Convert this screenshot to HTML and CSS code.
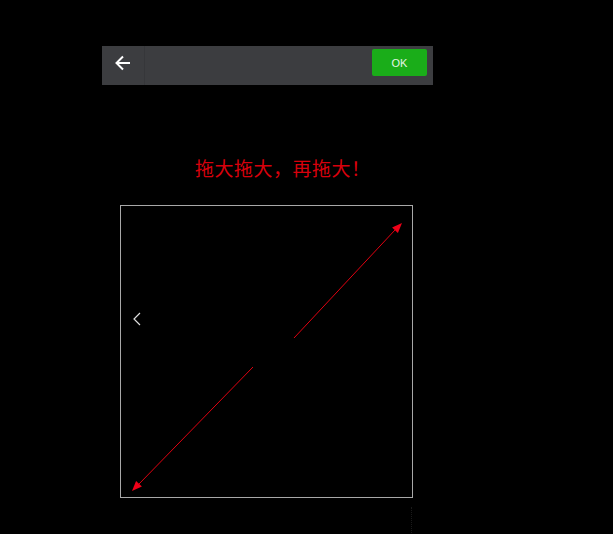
FILE: index.html
```html
<!DOCTYPE html>
<html lang="zh-CN">
<head>
    <meta charset="UTF-8">
    <meta name="viewport" content="width=device-width, initial-scale=1.0">
    <title>拖大</title>
    <link rel="stylesheet" href="styles.css">
</head>
<body>
    <!-- Top bar -->
    <div class="toolbar">
        <div class="back">
            <svg width="18" height="18" viewBox="0 0 18 18">
                <path d="M16 9H2.5 M9 2.5 2.5 9 9 15.5" fill="none" stroke="#fff" stroke-width="2"/>
            </svg>
        </div>
        <div class="spacer"></div>
        <button class="ok">OK</button>
    </div>

    <h1 class="hint">拖大拖大，再拖大！</h1>

    <!-- Crop box -->
    <div class="stage">
        <div class="box">
            <svg class="arrows" width="291" height="291" viewBox="0 0 291 291">
                <line x1="18" y1="278" x2="132" y2="161" stroke="#e00010" stroke-width="1"/>
                <line x1="173" y1="132" x2="274" y2="24" stroke="#e00010" stroke-width="1"/>
                <polygon points="281,17 276.9,27 271.1,21.4" fill="#f00018"/>
                <polygon points="11,285 20.9,280.6 15.1,275" fill="#f00018"/>
            </svg>
            <span class="chevron">
                <svg width="10" height="14" viewBox="0 0 10 14">
                    <path d="M8 1 2 7 8 13" fill="none" stroke="#ddd" stroke-width="1.2"/>
                </svg>
            </span>
        </div>
        <div class="dots"></div>
    </div>
</body>
</html>
```

FILE: styles.css
```css
/* Base */
body {
    margin: 0;
    background-color: #000;
    font-family: 'Liberation Sans', Arial, sans-serif;
    height: 534px;
    overflow: hidden;
}

/* Top bar */
.toolbar {
    display: flex;
    width: 331px;
    height: 39px;
    margin: 46px 0 0 102px;
    background-color: #3c3d40;
}

.back {
    width: 41px;
    display: flex;
    justify-content: center;
    padding: 8px 1px 0 0;
    border-right: 1px solid #36373a;
}

.back svg {
    display: block;
}

.spacer {
    flex: 1;
}

.ok {
    width: 55px;
    height: 27px;
    margin: 3px 6px 0 0;
    border: none;
    border-radius: 2px;
    background-color: #1aad19;
    color: #e6f5e6;
    font-family: 'Liberation Sans', Arial, sans-serif;
    font-size: 11px;
    padding: 0;
}

/* Hint text */
.hint {
    margin: 73px 0 0 195px;
    color: #d8000c;
    font-family: 'Liberation Serif', 'Noto Sans CJK SC', serif;
    font-size: 19px;
    font-weight: normal;
    line-height: 24px;
    letter-spacing: 0.5px;
}

/* Stage */
.stage {
    margin: 23px 0 0 120px;
    position: relative;
}

.box {
    position: relative;
    width: 291px;
    height: 291px;
    border: 1px solid #a8a8a8;
}

.arrows {
    display: block;
}

.chevron {
    position: absolute;
    left: 11px;
    top: 106px;
}

.dots {
    position: absolute;
    left: 291px;
    top: 302px;
    width: 1px;
    height: 26px;
    border-left: 1px dotted #1a1a1a;
}
```
